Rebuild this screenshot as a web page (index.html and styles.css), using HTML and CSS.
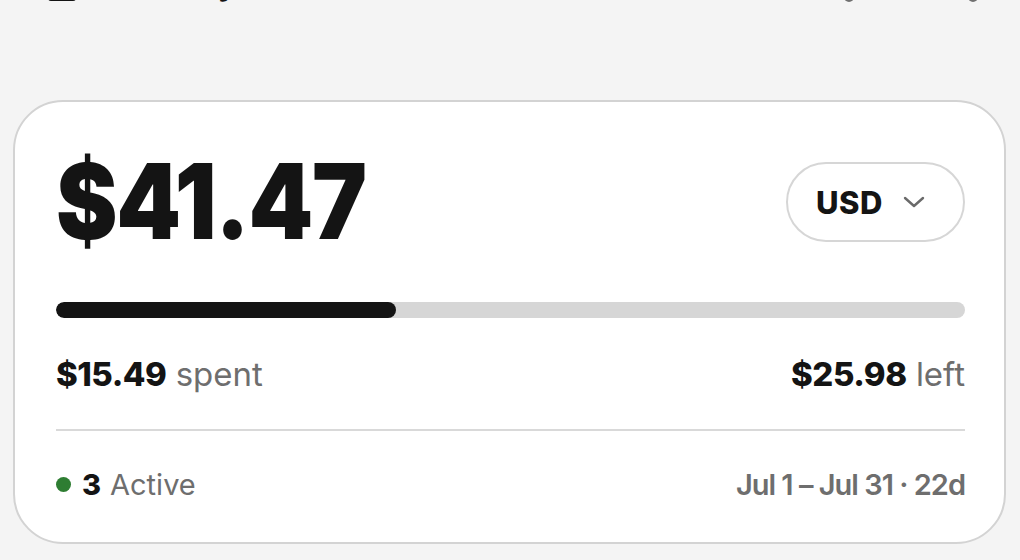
FILE: index.html
```html
<!DOCTYPE html>
<html lang="en">
<head>
<meta charset="utf-8">
<title>Budget</title>
<link rel="stylesheet" href="styles.css">
</head>
<body>
<header class="topbar">
  <div class="brand">
    <span class="brand-icon"></span>
    <span class="brand-title">Monthly</span>
  </div>
  <div class="top-actions">
    <span class="top-dot"></span>
    <span class="top-dot"></span>
  </div>
</header>
<section class="card">
  <div class="card-head">
    <div class="amount">$41.47</div>
    <button class="currency" type="button">
      <span class="currency-code">USD</span>
      <svg class="chevron" width="22" height="14" viewBox="0 0 22 14" aria-hidden="true">
        <path d="M2 3 L11 11 L20 3" fill="none" stroke="#6a6a6a" stroke-width="2.4" stroke-linecap="round" stroke-linejoin="round"/>
      </svg>
    </button>
  </div>
  <div class="progress"><div class="progress-fill" style="width: 37.35%"></div></div>
  <div class="stats">
    <div class="stat"><strong>$15.49</strong> <span class="muted">spent</span></div>
    <div class="stat"><strong>$25.98</strong> <span class="muted">left</span></div>
  </div>
  <div class="divider"></div>
  <div class="footer">
    <div class="active"><span class="dot"></span><strong>3</strong> <span class="muted">Active</span></div>
    <div class="period">Jul 1 – Jul 31 · 22d</div>
  </div>
</section>
</body>
</html>
```

FILE: styles.css
```css
html, body {
  margin: 0;
  padding: 0;
  background: #f4f4f4;
  font-family: Inter, "Liberation Sans", sans-serif;
  color: #141414;
}

.topbar {
  height: 40px;
  margin-top: -50px;
  display: flex;
  justify-content: space-between;
  align-items: flex-end;
  padding: 0 42px 0 48px;
}

.brand {
  display: flex;
  align-items: flex-end;
  gap: 32px;
}

.brand-icon {
  box-sizing: border-box;
  width: 28px;
  height: 24px;
  border: 2.5px solid #141414;
  border-radius: 3px;
  margin-bottom: -11px;
}

.brand-title {
  font-size: 32px;
  font-weight: 700;
  line-height: 32px;
  margin-bottom: -10px;
}

.top-actions {
  display: flex;
  gap: 114px;
  align-items: flex-end;
}

.top-dot {
  width: 10px;
  height: 10px;
  border-radius: 50%;
  background: #707070;
  margin-bottom: -12px;
}

.card {
  box-sizing: border-box;
  width: 993px;
  height: 444px;
  margin: 110px 0 0 13px;
  padding: 60px 39px 0 41px;
  background: #ffffff;
  border: 2px solid #d3d3d3;
  border-radius: 50px;
}

.card-head {
  display: flex;
  justify-content: space-between;
  align-items: center;
  height: 80px;
}

.amount {
  font-size: 105px;
  font-weight: 900;
  line-height: 80px;
  letter-spacing: -1.5px;
  margin-top: -3px;
  transform: scaleX(0.88);
  transform-origin: left center;
}

.currency {
  box-sizing: border-box;
  height: 80px;
  width: 179px;
  border: 2px solid #d6d6d6;
  border-radius: 40px;
  background: #fff;
  display: flex;
  align-items: center;
  justify-content: center;
  gap: 20px;
  padding: 0 10px 0 0;
  font-family: inherit;
}

.currency-code {
  font-size: 31px;
  font-weight: 800;
  color: #141414;
  letter-spacing: 0.5px;
}

.chevron {
  display: block;
}

.progress {
  height: 16px;
  margin-top: 60px;
  background: #d6d6d6;
  border-radius: 8px;
  overflow: hidden;
}

.progress-fill {
  height: 100%;
  background: #141414;
  border-radius: 8px;
}

.stats {
  display: flex;
  justify-content: space-between;
  align-items: center;
  height: 40px;
  margin-top: 36px;
  font-size: 33px;
}

.stat strong {
  font-weight: 800;
  letter-spacing: -0.5px;
}

.muted {
  color: #6e6e6e;
  font-weight: 400;
}

.divider {
  height: 2px;
  background: #d9d9d9;
  margin-top: 35px;
}

.footer {
  display: flex;
  justify-content: space-between;
  align-items: center;
  height: 40px;
  margin-top: 33px;
  font-size: 29px;
}

.active {
  display: flex;
  align-items: center;
}

.dot {
  width: 15px;
  height: 15px;
  border-radius: 50%;
  background: #2e7d32;
  margin-right: 11px;
}

.active strong {
  font-weight: 800;
  margin-right: 9px;
}

.period {
  color: #6e6e6e;
  font-weight: 600;
  letter-spacing: -1px;
}
```
